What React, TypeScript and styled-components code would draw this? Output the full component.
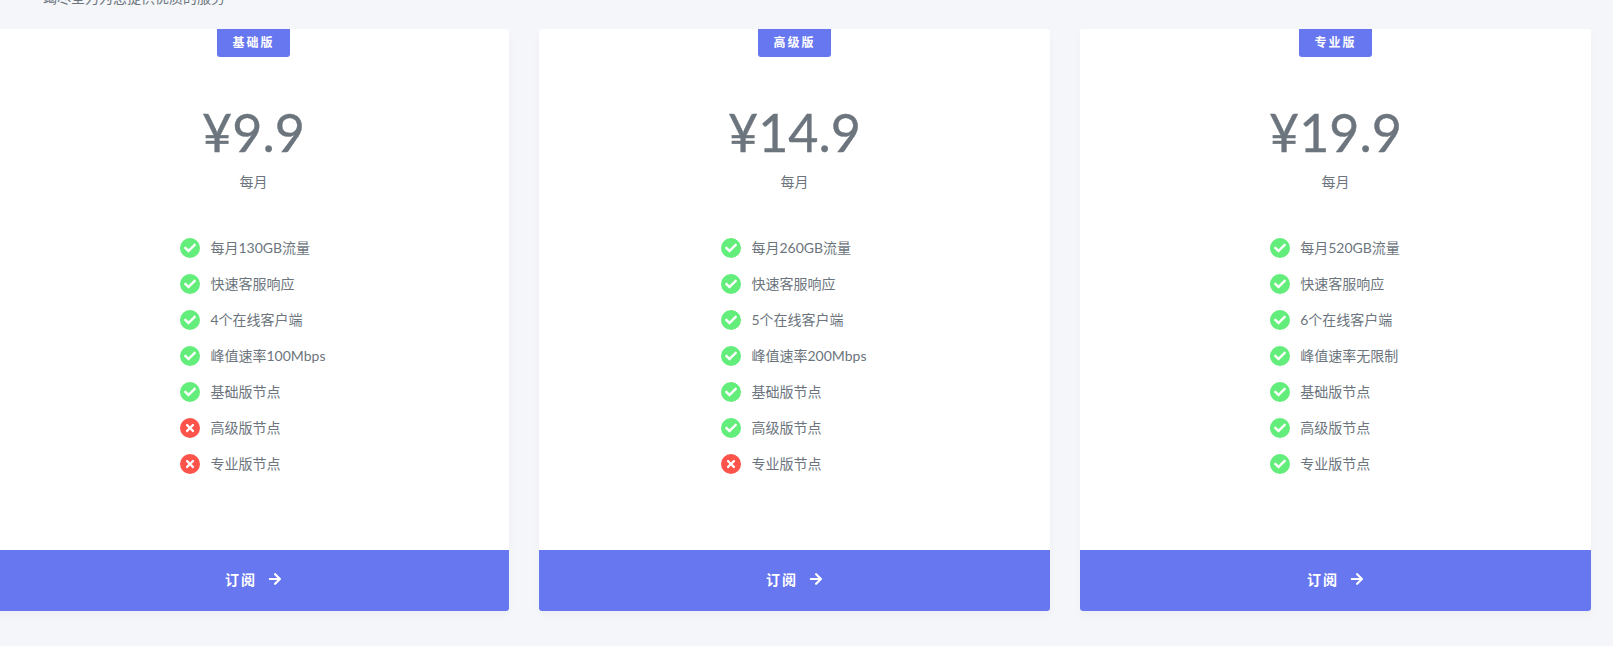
import React from 'react';
import styled, { createGlobalStyle } from 'styled-components';
import { FaArrowRight, FaCheck, FaTimes } from 'react-icons/fa';

const GlobalStyle = createGlobalStyle`
  html, body {
    margin: 0;
    height: 646px;
    overflow: hidden;
    background: #f4f6f9;
  }
  body {
    font-family: 'Lato', 'Noto Sans CJK SC', sans-serif;
    font-size: 14px;
    color: #6c757d;
  }
`;

const Page = styled.div`
  margin-top: -13px;
`;

const Lead = styled.p`
  margin: 0 0 21px 43px;
  line-height: 21px;
`;

const Row = styled.div`
  display: grid;
  grid-template-columns: repeat(3, 511px);
  column-gap: 30px;
  margin-left: -2px;
`;

const Card = styled.div`
  display: flex;
  flex-direction: column;
  height: 582px;
  background: #fff;
  border-radius: 3px;
  box-shadow: 0 4px 8px rgba(0, 0, 0, 0.03);
  text-align: center;
  overflow: hidden;
`;

const Badge = styled.div`
  align-self: center;
  width: 73px;
  height: 28px;
  line-height: 28px;
  background: #6777ef;
  border-radius: 0 0 3px 3px;
  color: #fff;
  font-size: 12px;
  font-weight: 700;
  letter-spacing: 2px;
`;

const Price = styled.div`
  margin-top: 47px;
  font-size: 52px;
  line-height: 56px;
  font-weight: 400;
  -webkit-text-stroke: 0.4px #6c757d;
`;

const Period = styled.div`
  margin-top: 11px;
  line-height: 21px;
`;

const Features = styled.ul`
  display: inline-flex;
  flex-direction: column;
  align-self: center;
  gap: 15px;
  margin: 45px 0 0;
  padding: 0 1px 0 0;
  list-style: none;
`;

const Feature = styled.li`
  display: flex;
  align-items: center;
  gap: 10px;
  line-height: 21px;
`;

const StatusIcon = styled.span<{ $ok: boolean }>`
  display: flex;
  align-items: center;
  justify-content: center;
  width: 20px;
  height: 20px;
  border-radius: 50%;
  background: ${(p) => (p.$ok ? '#63ed7a' : '#fc544b')};
  color: #fff;
  font-size: 12px;
`;

const Subscribe = styled.a`
  display: flex;
  align-items: center;
  justify-content: center;
  gap: 11px;
  height: 58px;
  padding-bottom: 3px;
  margin-top: auto;
  background: #6777ef;
  color: #fff;
  font-size: 14px;
  font-weight: 700;
  letter-spacing: 2px;
  cursor: pointer;
`;

const plans = [
  {
    name: '基础版',
    price: '¥9.9',
    features: [
      ['每月130GB流量', true],
      ['快速客服响应', true],
      ['4个在线客户端', true],
      ['峰值速率100Mbps', true],
      ['基础版节点', true],
      ['高级版节点', false],
      ['专业版节点', false],
    ],
  },
  {
    name: '高级版',
    price: '¥14.9',
    features: [
      ['每月260GB流量', true],
      ['快速客服响应', true],
      ['5个在线客户端', true],
      ['峰值速率200Mbps', true],
      ['基础版节点', true],
      ['高级版节点', true],
      ['专业版节点', false],
    ],
  },
  {
    name: '专业版',
    price: '¥19.9',
    features: [
      ['每月520GB流量', true],
      ['快速客服响应', true],
      ['6个在线客户端', true],
      ['峰值速率无限制', true],
      ['基础版节点', true],
      ['高级版节点', true],
      ['专业版节点', true],
    ],
  },
] as { name: string; price: string; features: [string, boolean][] }[];

const App = () => {
  return (
    <Page>
      <GlobalStyle />
      <Lead>竭尽全力为您提供优质的服务</Lead>
      <Row>
        {plans.map((plan) => (
          <Card key={plan.name}>
            <Badge>{plan.name}</Badge>
            <Price>{plan.price}</Price>
            <Period>每月</Period>
            <Features>
              {plan.features.map(([label, ok]) => (
                <Feature key={label}>
                  <StatusIcon $ok={ok}>{ok ? <FaCheck /> : <FaTimes />}</StatusIcon>
                  {label}
                </Feature>
              ))}
            </Features>
            <Subscribe>
              订阅
              <FaArrowRight size={14} />
            </Subscribe>
          </Card>
        ))}
      </Row>
    </Page>
  );
};

export default App;
